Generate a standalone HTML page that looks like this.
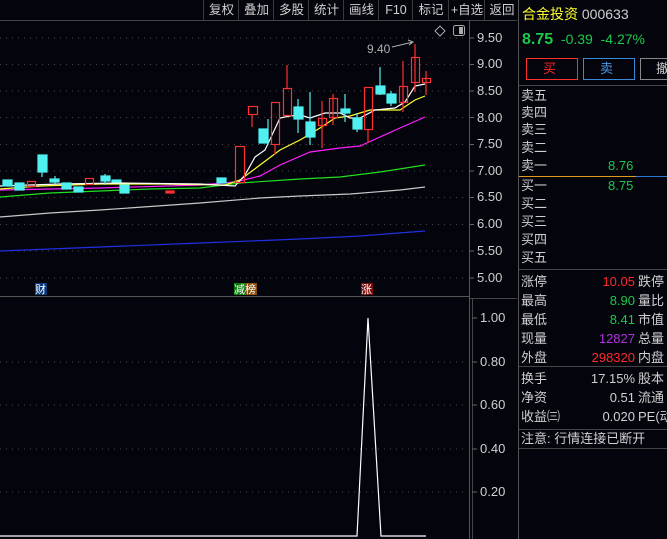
<!DOCTYPE html>
<html><head><meta charset="utf-8"><style>
body{margin:0;width:667px;height:539px;background:#03040c;overflow:hidden;font-family:"Liberation Sans","Noto Sans CJK SC",sans-serif;position:relative;color:#c8c8c8}
.t{position:absolute;font-size:13px;line-height:16px;white-space:nowrap}
.tb{position:absolute;top:0;height:20px;font-size:12.5px;line-height:20px;color:#d0d0d0;border-left:1px solid #3a3a3a;text-align:center}
.r{text-align:right}
.g{color:#1ec84a}.red{color:#ff2a2a}.w{color:#d0d0d0}
</style></head><body>
<svg width="667" height="539" style="position:absolute;left:0;top:0">
<line x1="0" y1="20.5" x2="517" y2="20.5" stroke="#444"/>
<line x1="469.5" y1="20" x2="469.5" y2="539" stroke="#555"/>
<line x1="0" y1="296.5" x2="469" y2="296.5" stroke="#555"/>
<line x1="472.5" y1="298" x2="472.5" y2="539" stroke="#444"/>
<line x1="470" y1="298.5" x2="517" y2="298.5" stroke="#444"/>
<line x1="518.5" y1="0" x2="518.5" y2="539" stroke="#555"/>
<g stroke="#4a4a4a" stroke-dasharray="1,5">
<line x1="0" y1="38" x2="466" y2="38"/><line x1="0" y1="64.5" x2="466" y2="64.5"/><line x1="0" y1="91" x2="466" y2="91"/><line x1="0" y1="117.5" x2="466" y2="117.5"/><line x1="0" y1="144.5" x2="466" y2="144.5"/><line x1="0" y1="171" x2="466" y2="171"/><line x1="0" y1="197.5" x2="466" y2="197.5"/><line x1="0" y1="224.5" x2="466" y2="224.5"/><line x1="0" y1="251" x2="466" y2="251"/><line x1="0" y1="278" x2="466" y2="278"/>
<line x1="0" y1="362" x2="466" y2="362"/><line x1="0" y1="405" x2="466" y2="405"/><line x1="0" y1="449" x2="466" y2="449"/><line x1="0" y1="492" x2="466" y2="492"/>
</g>
<g stroke="#666"><line x1="469" y1="38" x2="474" y2="38"/><line x1="469" y1="64.5" x2="474" y2="64.5"/><line x1="469" y1="91" x2="474" y2="91"/><line x1="469" y1="117.5" x2="474" y2="117.5"/><line x1="469" y1="144.5" x2="474" y2="144.5"/><line x1="469" y1="171" x2="474" y2="171"/><line x1="469" y1="197.5" x2="474" y2="197.5"/><line x1="469" y1="224.5" x2="474" y2="224.5"/><line x1="469" y1="251" x2="474" y2="251"/><line x1="469" y1="278" x2="474" y2="278"/>
<line x1="472" y1="318" x2="477" y2="318"/><line x1="472" y1="362" x2="477" y2="362"/><line x1="472" y1="405" x2="477" y2="405"/><line x1="472" y1="449" x2="477" y2="449"/><line x1="472" y1="492" x2="477" y2="492"/></g>
<g fill="none" stroke-width="1.2">
<polyline stroke="#2030e0" points="0,251 50,249 100,247 200,243 300,239 360,236 425,231"/>
<polyline stroke="#c8c8c8" points="0,217 50,213 100,210 200,203 260,198 300,196 350,194 400,190 425,187"/>
<polyline stroke="#20e020" points="0,197 50,193 100,191 150,189 200,188 240,183 300,179 340,177 380,172 425,165"/>
<polyline stroke="#ff20ff" points="0,190 100,188 200,185 235,182 260,176 280,165 310,152 340,148 360,146 380,137 400,128 425,117"/>
<polyline stroke="#ffff30" points="0,189 40,186 100,184 160,184 225,185 240,180 260,165 280,150 300,140 320,128 335,118 350,116 370,110 400,110 415,100 425,96"/>
<polyline stroke="#ffffff" points="0,186 60,184 120,183 200,184 235,186 245,175 255,157 265,150 280,118 290,116 300,115 310,118 325,113 340,113 350,118 360,118 375,110 395,108 405,102 415,86 425,84"/>
</g>
<g stroke-width="1.2">
<g stroke="#50f0f0" fill="#50f0f0">
<line x1="42" y1="155" x2="42" y2="177"/><rect x="38" y="155" width="9" height="17"/>
<rect x="3" y="180" width="9" height="6"/><rect x="15" y="183" width="9" height="7"/><line x1="55" y1="176" x2="55" y2="184"/><rect x="50" y="179" width="9" height="3"/><rect x="62" y="183" width="9" height="6"/><rect x="74" y="187" width="9" height="5"/><line x1="105" y1="174" x2="105" y2="185"/><rect x="101" y="176" width="9" height="5"/><rect x="112" y="180" width="9" height="2"/><rect x="120" y="185" width="9" height="8"/>
<rect x="217" y="178" width="9" height="5"/>
<line x1="268" y1="119" x2="268" y2="145"/><rect x="259" y="129" width="9" height="14"/>
<line x1="298" y1="99" x2="298" y2="133"/><rect x="294" y="107" width="9" height="12"/>
<line x1="310" y1="92" x2="310" y2="145"/><rect x="306" y="122" width="9" height="15"/>
<line x1="345" y1="94" x2="345" y2="122"/><rect x="341" y="109" width="9" height="4"/>
<line x1="357" y1="113" x2="357" y2="132"/><rect x="353" y="118" width="9" height="11"/>
<line x1="380" y1="67" x2="380" y2="95"/><rect x="376" y="86" width="9" height="8"/>
<line x1="391" y1="91" x2="391" y2="106"/><rect x="387" y="94" width="9" height="9"/>
</g>
<g stroke="#ff3030" fill="none">
<rect x="27.5" y="181.5" width="8" height="5"/><rect x="85.5" y="178.5" width="8" height="6"/><rect x="166" y="191" width="8" height="2" fill="#ff3030"/>
<rect x="235.5" y="146.5" width="9" height="36"/>
<line x1="252" y1="114" x2="252" y2="127"/><rect x="248.5" y="106.5" width="9" height="8"/>
<line x1="275" y1="144" x2="275" y2="155"/><rect x="271.5" y="102.5" width="8" height="42"/>
<line x1="287" y1="65" x2="287" y2="88"/><rect x="283.5" y="88.5" width="8" height="27"/>
<line x1="322" y1="101" x2="322" y2="148"/><rect x="318.5" y="118.5" width="8" height="7"/>
<line x1="333" y1="94" x2="333" y2="125"/><rect x="329.5" y="98.5" width="8" height="19"/>
<line x1="368" y1="129" x2="368" y2="143"/><rect x="364.5" y="87.5" width="8" height="42"/>
<line x1="403" y1="61" x2="403" y2="112"/><rect x="399.5" y="86.5" width="8" height="16"/>
<line x1="415" y1="44" x2="415" y2="92"/><rect x="411.5" y="57.5" width="8" height="25"/>
<line x1="426" y1="71" x2="426" y2="95"/><rect x="422.5" y="78.5" width="8" height="4"/>
</g>
</g>
<text x="367" y="53" fill="#b0b0b0" font-size="12" font-family="Liberation Sans">9.40</text>
<path d="M392 47 L413 42 M408 40 L413 42 L409 45" stroke="#b0b0b0" fill="none"/>
<path d="M440 26 L445 31 L440 36 L435 31Z" stroke="#aaa" fill="none"/>
<rect x="453.5" y="25.5" width="11" height="10" rx="2" stroke="#aaa" fill="none"/><rect x="459" y="27" width="4" height="7" fill="#aaa"/>
<rect x="35" y="283" width="12" height="12" fill="#0a3a7a"/><text x="35" y="293" fill="#fff" font-size="11">财</text>
<rect x="234" y="283" width="11" height="12" fill="#0a7a0a"/><rect x="245" y="283" width="12" height="12" fill="#8a4a0a"/><text x="234" y="293" fill="#fff" font-size="11">减榜</text>
<rect x="361" y="283" width="12" height="12" fill="#7a0a0a"/><text x="361" y="293" fill="#fff" font-size="11">涨</text>
<polyline fill="none" stroke="#fff" stroke-width="1.2" points="0,536 357,536 368,318 381,536 426,536"/>
<line x1="519" y1="85.5" x2="667" y2="85.5" stroke="#444"/>
<line x1="519" y1="176.5" x2="636" y2="176.5" stroke="#e09a20"/><line x1="636" y1="176.5" x2="667" y2="176.5" stroke="#2a7ad0"/>
<line x1="519" y1="269.5" x2="667" y2="269.5" stroke="#444"/>
<line x1="519" y1="366.5" x2="667" y2="366.5" stroke="#444"/>
<line x1="519" y1="429.5" x2="667" y2="429.5" stroke="#444"/>
<line x1="519" y1="448.5" x2="667" y2="448.5" stroke="#444"/>
<rect x="526.5" y="58.5" width="51" height="21" stroke="#ff3030" fill="none"/>
<rect x="583.5" y="58.5" width="51" height="21" stroke="#3a8ad8" fill="none"/>
<rect x="640.5" y="58.5" width="40" height="21" stroke="#888" fill="none"/>
</svg>
<div class="tb" style="left:203px;width:35px">复权</div><div class="tb" style="left:238px;width:35px">叠加</div><div class="tb" style="left:273px;width:35px">多股</div><div class="tb" style="left:308px;width:35px">统计</div><div class="tb" style="left:343px;width:35px">画线</div><div class="tb" style="left:378px;width:34px">F10</div><div class="tb" style="left:412px;width:36px">标记</div><div class="tb" style="left:448px;width:36px">+自选</div><div class="tb" style="left:484px;width:34px">返回</div>
<div class="t w" style="left:477px;top:30px">9.50</div><div class="t w" style="left:477px;top:56px">9.00</div><div class="t w" style="left:477px;top:83px">8.50</div><div class="t w" style="left:477px;top:110px">8.00</div><div class="t w" style="left:477px;top:136px">7.50</div><div class="t w" style="left:477px;top:163px">7.00</div><div class="t w" style="left:477px;top:189px">6.50</div><div class="t w" style="left:477px;top:216px">6.00</div><div class="t w" style="left:477px;top:243px">5.50</div><div class="t w" style="left:477px;top:270px">5.00</div>
<div class="t w" style="left:480px;top:310px">1.00</div><div class="t w" style="left:480px;top:354px">0.80</div><div class="t w" style="left:480px;top:397px">0.60</div><div class="t w" style="left:480px;top:441px">0.40</div><div class="t w" style="left:480px;top:484px">0.20</div>
<div class="t" style="left:522px;top:6px;font-size:14px"><span style="color:#ffff30">合金投资</span> <span class="w">000633</span></div>
<div class="t" style="left:522px;top:31px;font-size:14px"><b class="g" style="font-size:16px">8.75</b>&nbsp; <span class="g">-0.39</span>&nbsp; <span class="g">-4.27%</span></div>
<div class="t red" style="left:543px;top:61px">买</div><div class="t" style="left:600px;top:61px;color:#4a9ae8">卖</div><div class="t w" style="left:656px;top:61px">撤</div>
<div class="t w" style="left:521px;top:88px">卖五</div><div class="t w" style="left:521px;top:105px">卖四</div><div class="t w" style="left:521px;top:122px">卖三</div><div class="t w" style="left:521px;top:140px">卖二</div><div class="t w" style="left:521px;top:158px">卖一</div><div class="t g" style="left:608px;top:158px">8.76</div>
<div class="t w" style="left:521px;top:178px">买一</div><div class="t g" style="left:608px;top:178px">8.75</div><div class="t w" style="left:521px;top:196px">买二</div><div class="t w" style="left:521px;top:214px">买三</div><div class="t w" style="left:521px;top:232px">买四</div><div class="t w" style="left:521px;top:250px">买五</div>
<div class="t w" style="left:521px;top:272px;line-height:19px">涨停<br>最高<br>最低<br>现量<br>外盘</div>
<div class="t r" style="right:32px;top:272px;line-height:19px"><span class="red">10.05</span><br><span class="g">8.90</span><br><span class="g">8.41</span><br><span style="color:#b030e0">12827</span><br><span class="red">298320</span></div>
<div class="t w" style="left:638px;top:272px;line-height:19px">跌停<br>量比<br>市值<br>总量<br>内盘</div>
<div class="t w" style="left:521px;top:369px;line-height:19px">换手<br>净资<br>收益㈢</div>
<div class="t w r" style="right:32px;top:369px;line-height:19px">17.15%<br>0.51<br>0.020</div>
<div class="t w" style="left:638px;top:369px;line-height:19px">股本<br>流通<br>PE(动</div>
<div class="t w" style="left:521px;top:431px">注意: 行情连接已断开</div>
</body></html>
